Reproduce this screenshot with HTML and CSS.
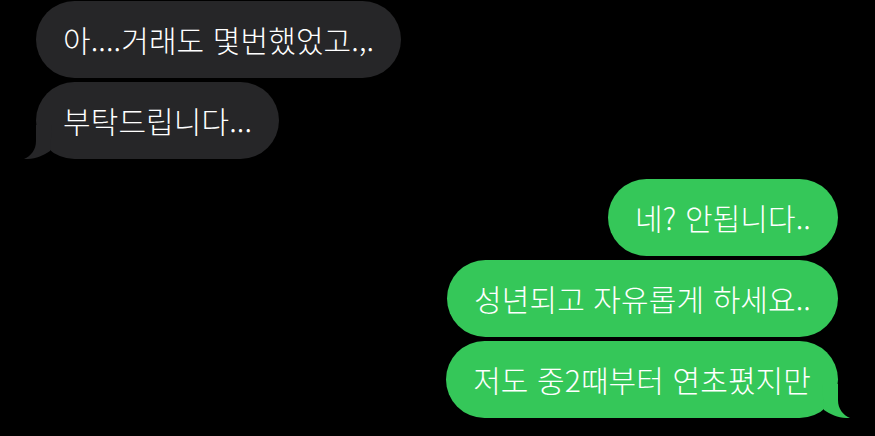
FILE: index.html
```html
<!DOCTYPE html>
<html lang="ko">

<head>
    <meta charset="UTF-8">
    <meta name="viewport" content="width=device-width, initial-scale=1.0">
    <title>Messages</title>
    <link rel="stylesheet" href="styles.css">
</head>

<body>
    <div id="chat">
        <div class="group in">
            <div class="bubble">아....거래도 몇번했었고.,.</div>
            <div class="bubble">부탁드립니다...
                <svg class="tail" viewBox="0 0 30 34"><path d="M14,0 L14,16 C14,25 9,31 2,34 C12,34.5 21,31 28,26 L30,0 Z"/></svg>
            </div>
        </div>
        <div class="group out">
            <div class="bubble">네? 안됩니다..</div>
            <div class="bubble">성년되고 자유롭게 하세요..</div>
            <div class="bubble">저도 중2때부터 연초폈지만
                <svg class="tail" viewBox="0 0 30 34"><path d="M14,0 L14,16 C14,25 9,31 2,34 C12,34.5 21,31 28,26 L30,0 Z"/></svg>
            </div>
        </div>
    </div>
</body>

</html>
```

FILE: styles.css
```css
* {
    margin: 0;
    padding: 0;
    box-sizing: border-box;
}

body {
    background-color: #000;
    font-family: "Noto Sans CJK KR", "Noto Sans", sans-serif;
    overflow: hidden;
}

#chat {
    display: flex;
    flex-direction: column;
    gap: 20px;
    padding: 1px 37px 0 36px;
}

.group {
    display: flex;
    flex-direction: column;
    gap: 4px;
}

.in {
    align-items: flex-start;
}

.out {
    align-items: flex-end;
}

.bubble {
    position: relative;
    height: 77px;
    padding: 0 27px;
    border-radius: 39px;
    font-size: 30px;
    font-weight: 300;
    letter-spacing: 0.1px;
    line-height: 77px;
    color: #fff;
    white-space: nowrap;
}

.in .bubble {
    background-color: #262628;
}

.out .bubble {
    background-color: #35c759;
}

.tail {
    position: absolute;
    bottom: 0;
    width: 30px;
    height: 34px;
}

.in .tail {
    left: -14px;
    fill: #262628;
}

.out .tail {
    right: -14px;
    fill: #35c759;
    transform: scaleX(-1);
}
```
